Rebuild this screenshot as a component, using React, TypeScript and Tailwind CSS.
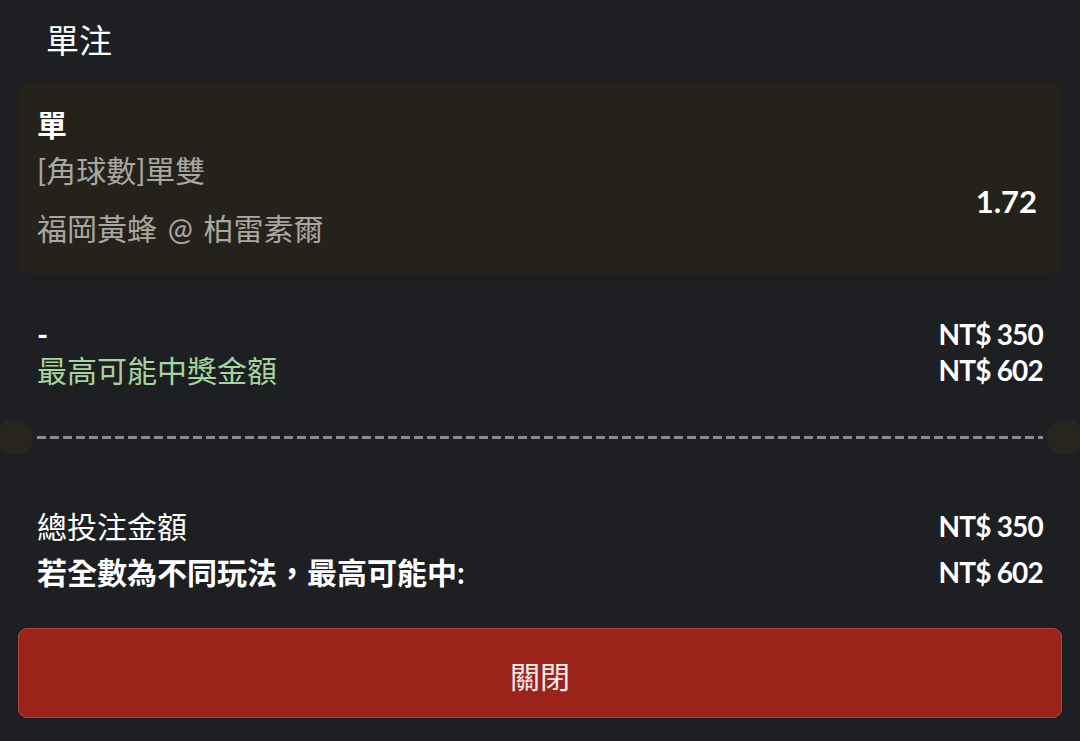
const font = "font-['Lato','Noto_Sans_CJK_TC',sans-serif]";

function Divider() {
  return (
    <div className="relative flex h-[36px] items-center">
      <div className="absolute left-[-3px] top-0 h-[36px] w-[36px] rounded-full bg-[#28251e]" />
      <div className="mx-[37px] h-[3px] flex-1 bg-[repeating-linear-gradient(90deg,#8d8d8d_0_9px,transparent_9px_13px)]" />
      <div className="absolute right-[-3px] top-0 h-[36px] w-[36px] rounded-full bg-[#28251e]" />
    </div>
  );
}

function Amount({ children }: { children: string }) {
  return <span className="text-[28px] font-bold tracking-[-0.8px]">{children}</span>;
}

export default function App() {
  return (
    <main className={`${font} min-h-screen w-full overflow-hidden bg-[#1e1f22] text-white`}>
      <header className="flex h-[82px] items-center pl-[46px] pb-[2px]">
        <h1 className="text-[33px] leading-none">單注</h1>
      </header>

      <section className="mx-[18px] flex h-[192px] rounded-[10px] bg-[#25221c] pl-[19px] pr-[25px] pt-[22px]">
        <div className="flex-1 text-[30px] leading-[40px]">
          <p className="font-bold">單</p>
          <p className="mt-[6px] text-[#aaa6a0]">[角球數]單雙</p>
          <p className="mt-[18px] text-[#aaa6a0] [word-spacing:3px]">福岡黃蜂 @ 柏雷素爾</p>
        </div>
        <div className="self-center pt-[24px] text-[31px] font-bold leading-none">1.72</div>
      </section>

      <section className="mt-[42px] grid grid-cols-[1fr_auto] items-center px-[37px] text-[30px] leading-[36px]">
        <span className="font-bold">-</span>
        <Amount>NT$ 350</Amount>
        <span className="text-[#a5d49f]">最高可能中獎金額</span>
        <Amount>NT$ 602</Amount>
      </section>

      <div className="mt-[31px]">
        <Divider />
      </div>

      <section className="mt-[51px] grid grid-cols-[1fr_auto] items-center gap-y-[6px] px-[37px] text-[30px] leading-[40px]">
        <span>總投注金額</span>
        <Amount>NT$ 350</Amount>
        <span className="font-bold">若全數為不同玩法，最高可能中:</span>
        <Amount>NT$ 602</Amount>
      </section>

      <div className="mx-[18px] mt-[36px]">
        <button className="flex h-[90px] w-full items-center justify-center rounded-[9px] border border-[#b2473d] bg-[#9a2419] pt-[6px] text-[30px] text-[#f6ecea]">
          關閉
        </button>
      </div>
    </main>
  );
}
